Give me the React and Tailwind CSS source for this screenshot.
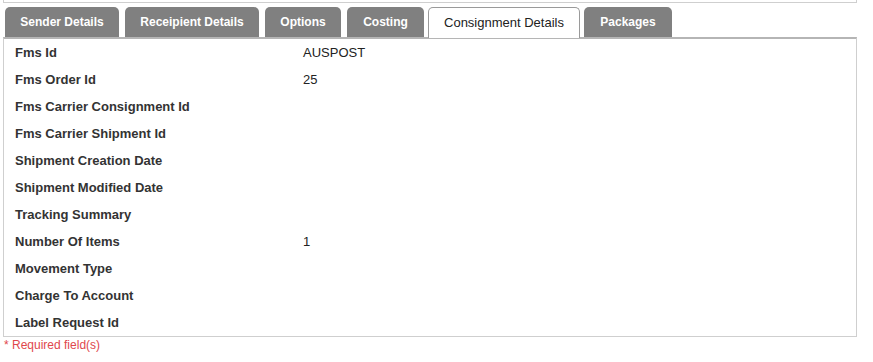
import React from 'react';

const TABS = [
  { label: 'Sender Details', w: 'w-[114px]', ml: 'ml-0' },
  { label: 'Receipient Details', w: 'w-[134px]', ml: 'ml-[6px]' },
  { label: 'Options', w: 'w-[76px]', ml: 'ml-[6px]' },
  { label: 'Costing', w: 'w-[77px]', ml: 'ml-[6px]' },
  { label: 'Consignment Details', w: 'w-[152px]', ml: 'ml-[4px]', active: true },
  { label: 'Packages', w: 'w-[88px]', ml: 'ml-[4px]' },
];

const ROWS = [
  ['Fms Id', 'AUSPOST'],
  ['Fms Order Id', '25'],
  ['Fms Carrier Consignment Id', ''],
  ['Fms Carrier Shipment Id', ''],
  ['Shipment Creation Date', ''],
  ['Shipment Modified Date', ''],
  ['Tracking Summary', ''],
  ['Number Of Items', '1'],
  ['Movement Type', ''],
  ['Charge To Account', ''],
  ['Label Request Id', ''],
];

const App = () => {
  return (
    <div className="w-[873px] h-[362px] bg-white font-['Liberation_Sans',Arial,sans-serif] overflow-hidden">
      <div className="ml-[3px] w-[854px] h-[3px] border-x border-b border-[#cfcfcf]"></div>

      <div className="ml-[3px] w-[854px] mt-[4px]">
        {/* Tabs */}
        <div className="flex pl-[2px] relative z-10">
          {TABS.map((t) =>
            t.active ? (
              <div
                key={t.label}
                className={`${t.w} ${t.ml} h-[31px] -mb-px flex items-center justify-center rounded-t-[5px] border border-b-0 border-[#9a9a9a] bg-white text-[13px] text-[#222]`}
              >
                {t.label}
              </div>
            ) : (
              <div
                key={t.label}
                className={`${t.w} ${t.ml} h-[30px] flex items-center justify-center rounded-t-[5px] bg-[#808080] text-[12px] font-bold text-white`}
              >
                {t.label}
              </div>
            )
          )}
        </div>

        {/* Consignment details panel */}
        <div className="border border-[#cfcfcf] border-t-[#b5b5b5] border-t-2">
          {ROWS.map(([label, value]) => (
            <div key={label} className="flex h-[27px] items-center">
              <div className="w-[299px] pl-[11px] text-[13px] font-bold text-[#333]">{label}</div>
              <div className="text-[13px] text-[#222]">{value}</div>
            </div>
          ))}
        </div>
      </div>

      <div className="pl-[4px] text-[12px] text-[#e0474c] leading-[14px] mt-px">* Required field(s)</div>
    </div>
  );
};

export default App;
